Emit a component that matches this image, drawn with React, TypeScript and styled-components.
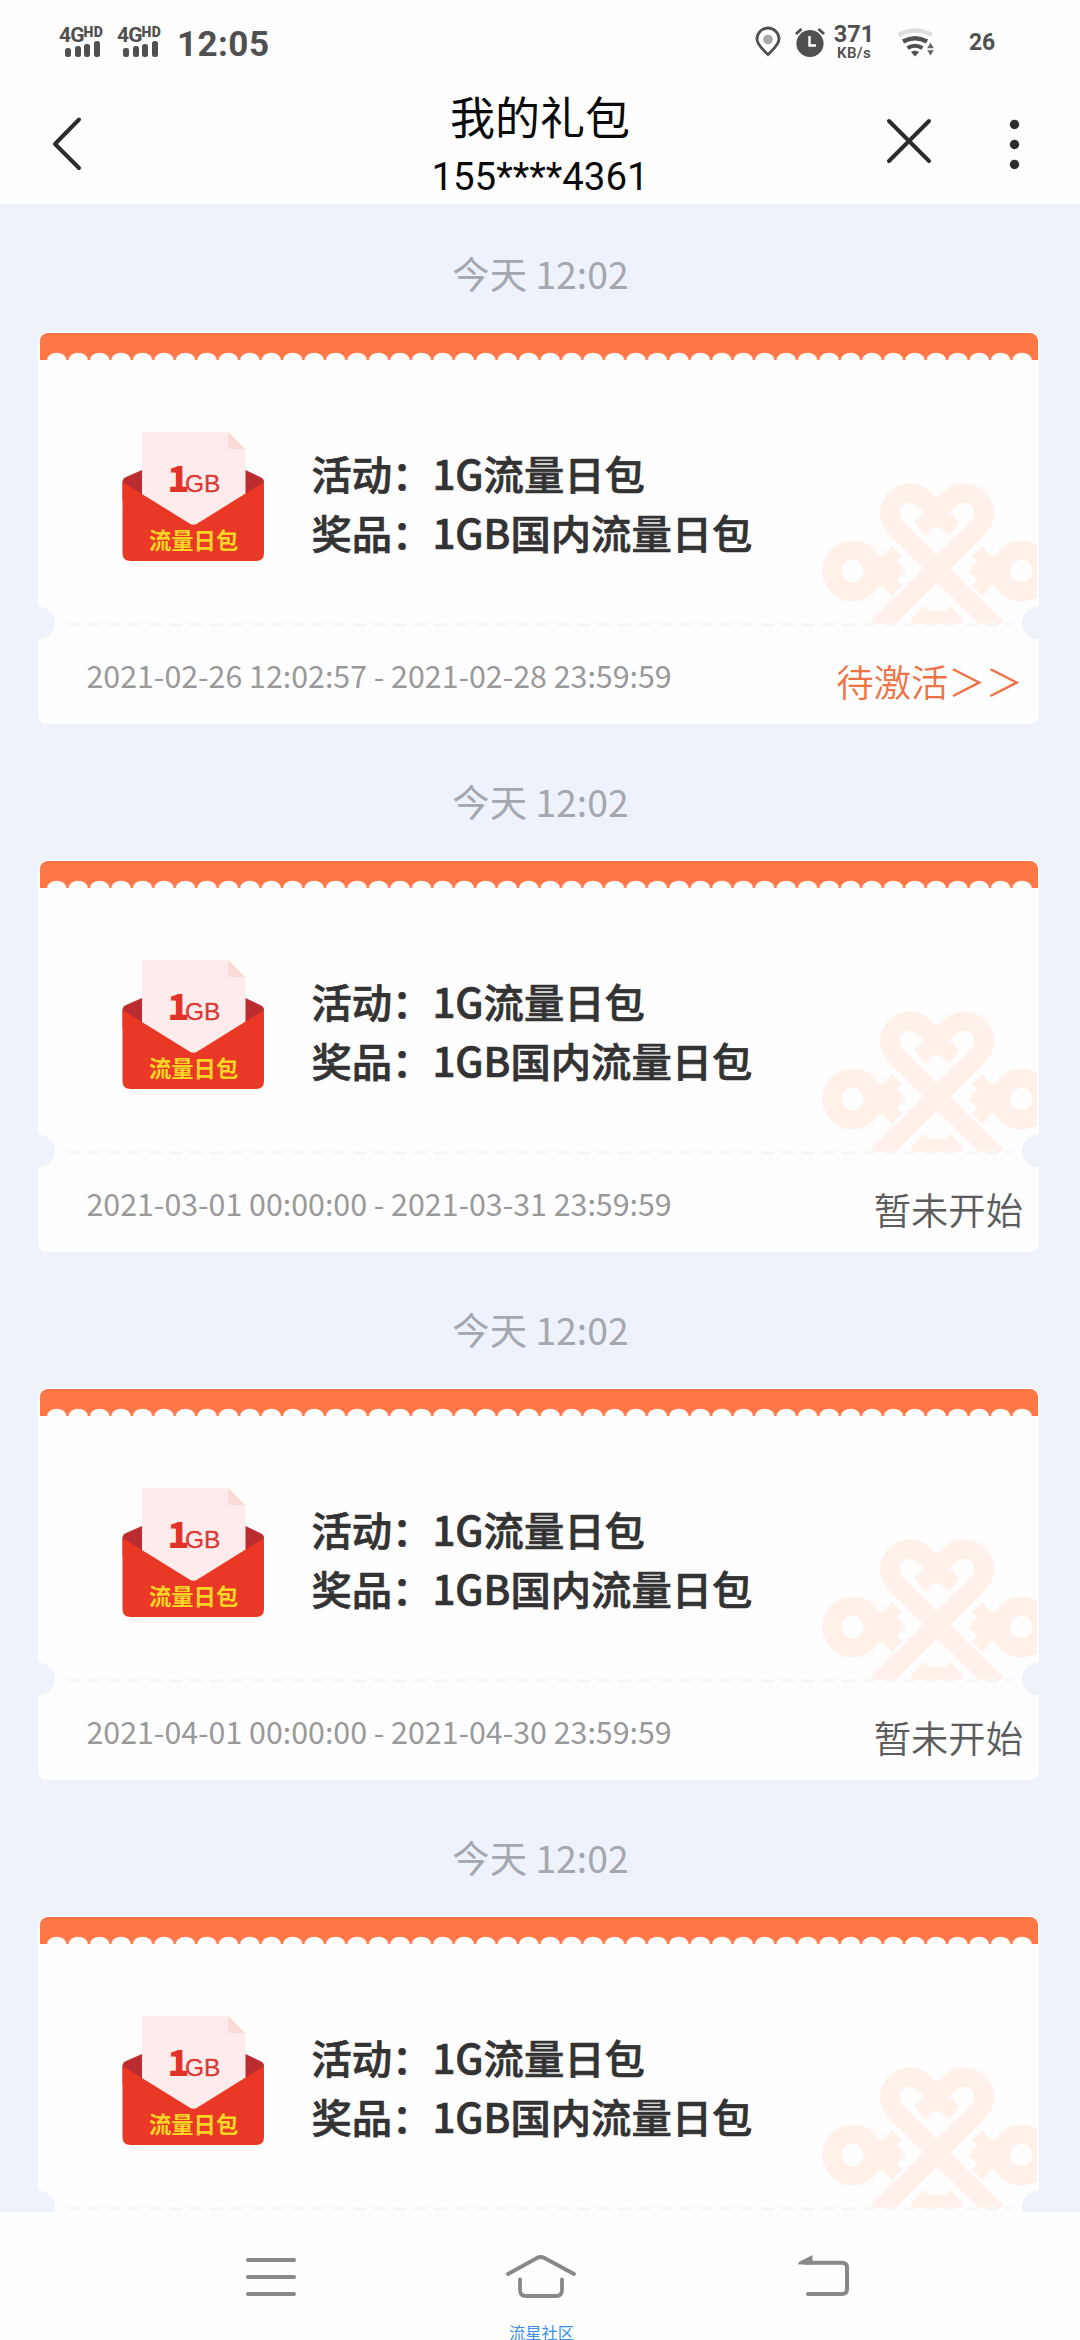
import React from "react";
import styled, { createGlobalStyle } from "styled-components";

const CJK = '"Noto Sans CJK SC", sans-serif';

const GlobalStyle = createGlobalStyle`
  * { box-sizing: border-box; }
  body { margin: 0; background: #fefefe; font-family: ${CJK}; }
`;

const Screen = styled.div`
  width: 1080px;
  height: 2340px;
  display: flex;
  flex-direction: column;
  overflow: hidden;
  background: #fefefe;
`;

const StatusBar = styled.div`
  height: 84px;
  flex: none;
  display: flex;
  justify-content: space-between;
  padding: 0 85px 0 59px;
  font-family: Roboto, sans-serif;
  color: #505050;
`;

const StatusGroup = styled.div`
  display: flex;
  align-items: flex-start;
`;

const Signal = styled.div`
  width: 58px;
  padding-top: 25px;
  display: flex;
  flex-direction: column;
`;

const SignalLabel = styled.div`
  height: 16px;
  display: flex;
  align-items: flex-start;
  font-size: 21px;
  line-height: 20px;
  font-weight: 700;
  letter-spacing: -0.9px;
  small {
    font-size: 14px;
    line-height: 14px;
    font-weight: 900;
    letter-spacing: 0.3px;
  }
`;

const SignalBars = styled.div`
  height: 16px;
  padding-left: 6px;
  display: flex;
  align-items: flex-end;
  gap: 3.7px;
`;

const SignalBar = styled.span<{ $h: number }>`
  width: 6px;
  height: ${(p) => p.$h}px;
  border-radius: 2.5px;
  background: #505050;
`;

const Clock = styled.div`
  padding: 24px 0 0 2px;
  font-size: 35px;
  line-height: 41px;
  font-weight: 700;
  letter-spacing: 0.45px;
`;

const Speed = styled.div`
  width: 42px;
  margin-left: 7px;
  padding-top: 22px;
  display: flex;
  flex-direction: column;
  align-items: center;
  font-weight: 700;
  font-size: 23.5px;
  line-height: 24px;
  small {
    font-size: 15px;
    line-height: 14px;
    letter-spacing: 0.4px;
    font-weight: 600;
  }
`;

const Battery = styled.div`
  margin-left: 34px;
  padding-top: 29px;
  font-size: 23px;
  line-height: 27px;
  font-weight: 700;
  letter-spacing: -0.2px;
`;

const StatusIcon = styled.svg<{ $ml?: number }>`
  display: block;
  flex: none;
  margin-left: ${(p) => p.$ml ?? 0}px;
`;

const Header = styled.header`
  height: 120px;
  flex: none;
  display: grid;
  grid-template-columns: 240px 1fr 240px;
`;

const HeaderSide = styled.div`
  display: flex;
  svg { display: block; }
`;

const Titles = styled.div`
  display: flex;
  flex-direction: column;
  align-items: center;
  color: #0a0a0a;
`;

const Title = styled.div`
  font-size: 45px;
  line-height: 64px;
`;

const Phone = styled.div`
  font-family: Roboto, sans-serif;
  font-size: 38.4px;
  line-height: 58px;
`;

const Content = styled.main`
  flex: 1;
  min-height: 0;
  overflow: hidden;
  background: #eef2fa;
`;

const Time = styled.div`
  height: 128px;
  padding: 9px 0 0 1px;
  display: flex;
  align-items: center;
  justify-content: center;
  color: #a4a7ad;
  font-size: 37.33px;
`;

const Card = styled.section`
  position: relative;
  width: 1001px;
  height: 392px;
  margin: 0 0 8px 38px;
  border-radius: 9px;
  background: #fefefe;
  overflow: hidden;
  display: flex;
  flex-direction: column;
`;

const Strip = styled.div`
  flex: none;
  height: 27px;
  margin: 1px 1px 0 2px;
  padding: 0 5px 0 6px;
  display: flex;
  align-items: flex-end;
  border-radius: 8px 8px 0 0;
  background: #ff7747;
`;

const Scallops = styled.div`
  flex: 1;
  height: 8px;
  background-image: radial-gradient(ellipse 10.4px 7.8px at 50% 100%, #fefefe 86%, rgba(254, 254, 254, 0) 98%);
  background-size: 21.5px 8px;
  background-repeat: round no-repeat;
`;

const Body = styled.div`
  flex: 1;
  display: flex;
  align-items: flex-start;
  padding-left: 82px;
`;

const Envelope = styled.svg`
  display: block;
  flex: none;
  margin-top: 70px;
`;

const Info = styled.div`
  margin: 83px 0 0 43.5px;
  flex: none;
  color: #333;
  font-size: 40.3px;
  line-height: 59px;
  font-weight: 500;
  -webkit-text-stroke: 0.7px #333;
  white-space: nowrap;
`;

const Watermark = styled.svg`
  position: absolute;
  right: 2px;
  top: 148px;
`;

const Dashes = styled.div`
  position: absolute;
  left: 29px;
  right: 26px;
  top: 291px;
  height: 3px;
  background: repeating-linear-gradient(90deg, #f7f7f7 0 13px, transparent 13px 20.4px);
`;

const Notch = styled.span<{ $side: "left" | "right" }>`
  position: absolute;
  top: 275px;
  ${(p) => p.$side}: -15px;
  width: 32px;
  height: 32px;
  border-radius: 50%;
  background: #eef2fa;
`;

const Footer = styled.div`
  height: 100px;
  flex: none;
  display: flex;
  align-items: center;
  justify-content: space-between;
  padding: 0 16px 0 48.5px;
`;

const Period = styled.div`
  padding-top: 1px;
  color: #999;
  font-size: 30.35px;
`;

const State = styled.div<{ $active: boolean }>`
  padding-top: 13px;
  color: ${(p) => (p.$active ? "#ee7446" : "#5c5c5c")};
  font-size: 37.33px;
  font-weight: 350;
`;

const NavBar = styled.nav`
  height: 128px;
  flex: none;
  display: flex;
  flex-direction: column;
  align-items: center;
  background: #fefefe;
`;

const NavIcons = styled.div`
  height: 108px;
  width: 100%;
  flex: none;
  padding: 38px 226px 0 241px;
  display: grid;
  grid-template-columns: 260px 1fr 60px;
  svg { display: block; }
`;

const Community = styled.div`
  color: #3d8fe8;
  font-size: 16.3px;
  line-height: 24px;
  padding-left: 3px;
`;

const tickets = [
  { period: "2021-02-26 12:02:57 - 2021-02-28 23:59:59", state: "待激活＞＞", active: true },
  { period: "2021-03-01 00:00:00 - 2021-03-31 23:59:59", state: "暂未开始", active: false },
  { period: "2021-04-01 00:00:00 - 2021-04-30 23:59:59", state: "暂未开始", active: false },
  { period: "2021-05-01 00:00:00 - 2021-05-31 23:59:59", state: "暂未开始", active: false },
];

function SimSignal() {
  return (
    <Signal>
      <SignalLabel>
        <span>4G</span>
        <small>HD</small>
      </SignalLabel>
      <SignalBars>
        {[9, 11, 13, 16].map((h) => (
          <SignalBar key={h} $h={h} />
        ))}
      </SignalBars>
    </Signal>
  );
}

function EnvelopeIcon() {
  return (
    <Envelope width="148" height="134" viewBox="120 430 148 134">
      <path d="M122.500 485 V481 Q123 478 126 477 L142 470 H245.500 L261 477.500 Q264 479 264 482 V500 H122.500Z" fill="#bb2c30" />
      <path d="M142 432 H228 L245.500 449 V510 L194 540 L142 510Z" fill="#feecec" />
      <path d="M228 432 L245.500 449 H228Z" fill="#fcdad8" />
      <path
        d="M122.500 482 L188 522.500 Q193.500 527 199 522.500 L264 482 V553 Q264 561 256 561 H130.500 Q122.500 561 122.500 553Z"
        fill="#e93926"
      />
      <text y="491.500">
        <tspan x="167.500" fontFamily='"Noto Sans CJK SC", sans-serif' fontWeight="900" fontSize="36" fill="#e0332a">1</tspan>
        <tspan x="185" fontFamily='"Liberation Sans", sans-serif' fontSize="24.500" fill="#d83a34" stroke="#d83a34" strokeWidth="0.300">GB</tspan>
      </text>
      <text x="149" y="549" fontFamily='"Noto Sans CJK SC", sans-serif' fontWeight="700" fontSize="22.300" fill="#fbd426">流量日包</text>
    </Envelope>
  );
}

function KnotMark() {
  return (
    <Watermark width="217" height="144" viewBox="120 120 651 432">
      <g fill="none" stroke="#fff0ea" strokeWidth="58">
        <path d="M650 565 L345.600 260.400 A60 60 0 0 1 430.400 175.600 L470 215" />
        <path d="M292 565 L596.400 260.400 A60 60 0 0 0 511.600 175.600 L472 215" />
        <circle cx="218" cy="393" r="62" />
        <circle cx="724" cy="393" r="62" />
      </g>
      <g fill="#fff0ea">
        <path d="M420 195 L434 215 L404 247 L435 289 L453 268 L471 258 L489 268 L507 289 L538 247 L508 215 L522 195Z" />
        <path d="M275 340 L305 348 L336 319 L366 350 L350 366 L377 393 L350 420 L366 436 L336 467 L305 438 L275 450Z" />
        <path d="M667 340 L637 348 L606 319 L576 350 L592 366 L565 393 L592 420 L576 436 L606 467 L637 438 L667 450Z" />
        <path d="M395 552 V534 L430 499 L450 513 H492 L512 499 L547 534 V552Z" />
      </g>
    </Watermark>
  );
}

function Ticket({ period, state, active }: { period: string; state: string; active: boolean }) {
  return (
    <>
      <Time>今天 12:02</Time>
      <Card>
        <Strip>
          <Scallops />
        </Strip>
        <Body>
          <EnvelopeIcon />
          <Info>
            <div>活动：1G流量日包</div>
            <div>奖品：1GB国内流量日包</div>
          </Info>
        </Body>
        <Footer>
          <Period>{period}</Period>
          <State $active={active}>{state}</State>
        </Footer>
        <KnotMark />
        <Dashes />
        <Notch $side="left" />
        <Notch $side="right" />
      </Card>
    </>
  );
}

export default function App() {
  return (
    <Screen>
      <GlobalStyle />
      <StatusBar>
        <StatusGroup>
          <SimSignal />
          <SimSignal />
          <Clock>12:05</Clock>
        </StatusGroup>
        <StatusGroup>
          <StatusIcon width="28" height="60" viewBox="754 0 28 60">
            <path d="M768 54.500 C764 50.500 757 45 757 39 A11 11 0 0 1 779 39 C779 45 772 50.500 768 54.500Z" fill="none" stroke="#505050" strokeWidth="2.800" />
            <circle cx="768" cy="39.500" r="4.800" fill="#a8a8a8" />
          </StatusIcon>
          <StatusIcon $ml={12} width="32" height="60" viewBox="794 0 32 60">
            <circle cx="810" cy="43.500" r="13.600" fill="#505050" />
            <path d="M796 34 L801.500 29 M824 34 L818.500 29" stroke="#505050" strokeWidth="3" />
            <path d="M809.500 36 V45.500 H816" fill="none" stroke="#fff" strokeWidth="2.400" />
          </StatusIcon>
          <Speed>
            371
            <small>KB/s</small>
          </Speed>
          <StatusIcon $ml={20} width="40" height="60" viewBox="895 0 40 60">
            <path d="M898.500 35 Q915.500 26 932 35" fill="none" stroke="#dedede" strokeWidth="4.500" />
            <path d="M903 41.500 Q915 35 927 41.500" fill="none" stroke="#505050" strokeWidth="4.500" />
            <path d="M907.500 48 Q915 43.500 922.500 48" fill="none" stroke="#505050" strokeWidth="4" />
            <path d="M911 52 Q915 49.500 919 52 L915 56.500Z" fill="#505050" />
            <path d="M930.500 42.500 L933.800 48.200 H927.200Z M930.500 55.500 L933.800 50.200 H927.200Z" fill="#666" />
          </StatusIcon>
          <Battery>26</Battery>
        </StatusGroup>
      </StatusBar>
      <Header>
        <HeaderSide>
          <svg width="100" height="120" viewBox="0 84 100 120" fill="none" stroke="#2c2c2c" strokeWidth="4" strokeLinecap="round" strokeLinejoin="round">
            <path d="M79 119.500 L55 144 L79 168" />
          </svg>
        </HeaderSide>
        <Titles>
          <Title>我的礼包</Title>
          <Phone>155****4361</Phone>
        </Titles>
        <HeaderSide>
          <svg width="240" height="120" viewBox="840 84 240 120" stroke="#2c2c2c" strokeWidth="4" strokeLinecap="round">
            <path d="M889 121 L929 161 M929 121 L889 161" />
            <g fill="#2c2c2c" stroke="none">
              <circle cx="1014.500" cy="124.500" r="4.700" />
              <circle cx="1014.500" cy="144.500" r="4.700" />
              <circle cx="1014.500" cy="164.500" r="4.700" />
            </g>
          </svg>
        </HeaderSide>
      </Header>
      <Content>
        {tickets.map((t) => (
          <Ticket key={t.period} {...t} />
        ))}
      </Content>
      <NavBar>
        <NavIcons>
          <svg width="60" height="54" viewBox="241 2250 60 54" stroke="#888" strokeWidth="4" strokeLinecap="round">
            <path d="M248 2260 H294 M248 2277 H294 M248 2294 H294" />
          </svg>
          <svg width="80" height="54" viewBox="501 2250 80 54" fill="none" stroke="#888" strokeWidth="3.800" strokeLinecap="round" strokeLinejoin="round">
            <path d="M508 2274 L537 2258 Q540.800 2256 544.500 2258 L574 2274" />
            <path d="M520 2279.500 V2290 Q520 2296 526 2296 H556 Q562 2296 562 2290 V2279.500" />
          </svg>
          <svg width="60" height="54" viewBox="794 2250 60 54" fill="none" stroke="#888" strokeWidth="4" strokeLinecap="round">
            <path d="M806 2262.700 H842 Q847 2262.700 847 2267.500 V2289 Q847 2294 842 2294 H808" />
            <path d="M798.500 2264.500 Q797.500 2262.500 800 2261.500 L812.500 2255 V2264.500Z" fill="#888" stroke="none" />
          </svg>
        </NavIcons>
        <Community>流星社区</Community>
      </NavBar>
    </Screen>
  );
}
